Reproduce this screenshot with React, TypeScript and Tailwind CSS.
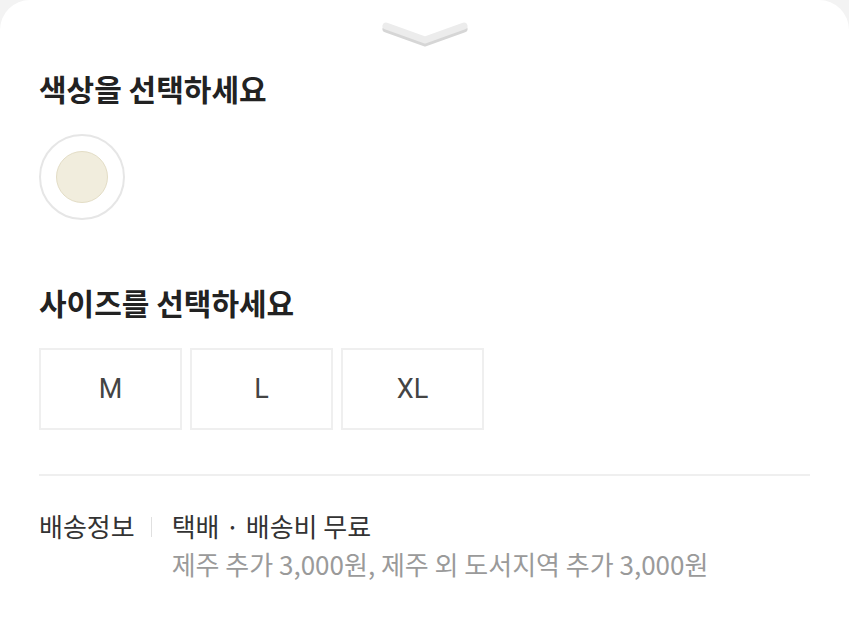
import { useState } from "react";

const SIZES = ["M", "L", "XL"];

export default function App() {
  const [size, setSize] = useState<string | null>(null);

  return (
    <div
      className="min-h-[617px] w-full bg-[#f3f3f3]"
      style={{ fontFamily: '"Noto Sans CJK KR", "Noto Sans", sans-serif' }}
    >
      <div className="min-h-[617px] rounded-t-[30px] bg-white px-[39px] pb-10">
        {/* handle */}
        <div className="flex justify-center pt-[20px]">
          <svg width="86" height="28" viewBox="0 0 86 28" fill="none">
            <path
              d="M4 8 L43 22 L82 8"
              stroke="#d6d6d6"
              strokeWidth="7"
              strokeLinecap="round"
              strokeLinejoin="round"
              transform="translate(0 1)"
            />
            <path
              d="M4 6 L43 20 L82 6"
              stroke="#ececec"
              strokeWidth="7"
              strokeLinecap="round"
              strokeLinejoin="round"
            />
          </svg>
        </div>

        {/* color */}
        <h2 className="mt-[22px] text-[30px] leading-[36px] font-bold text-[#222]">
          색상을 선택하세요
        </h2>
        <div className="mt-[28px] flex">
          <button className="flex h-[86px] w-[86px] items-center justify-center rounded-full border-2 border-[#e6e6e6] bg-white">
            <span className="h-[52px] w-[52px] rounded-full border border-[#e3ddc6] bg-[#f1eddd]" />
          </button>
        </div>

        {/* size */}
        <h2 className="mt-[64px] text-[30px] leading-[36px] font-bold text-[#222]">
          사이즈를 선택하세요
        </h2>
        <div className="mt-[28px] flex gap-[8px]">
          {SIZES.map((s) => (
            <button
              key={s}
              onClick={() => setSize(s)}
              className={`flex h-[82px] w-[143px] items-center justify-center border-2 text-[27px] text-[#444] ${
                size === s ? "border-[#333]" : "border-[#efefef]"
              }`}
              style={{ fontFamily: '"Roboto", "Noto Sans CJK KR", sans-serif' }}
            >
              {s}
            </button>
          ))}
        </div>

        {/* divider */}
        <div className="mt-[44px] h-[2px] w-full bg-[#efefef]" />

        {/* shipping */}
        <div className="mt-[31px] flex items-start text-[26px] leading-[38px]">
          <span className="text-[#333]">배송정보</span>
          <span className="ml-[16px] mr-[20px] mt-[10px] h-[20px] w-[1px] bg-[#e0e0e0]" />
          <div className="flex flex-col">
            <span className="text-[#333]">택배 · 배송비 무료</span>
            <span className="text-[#9a9a9a]">제주 추가 3,000원, 제주 외 도서지역 추가 3,000원</span>
          </div>
        </div>
      </div>
    </div>
  );
}
